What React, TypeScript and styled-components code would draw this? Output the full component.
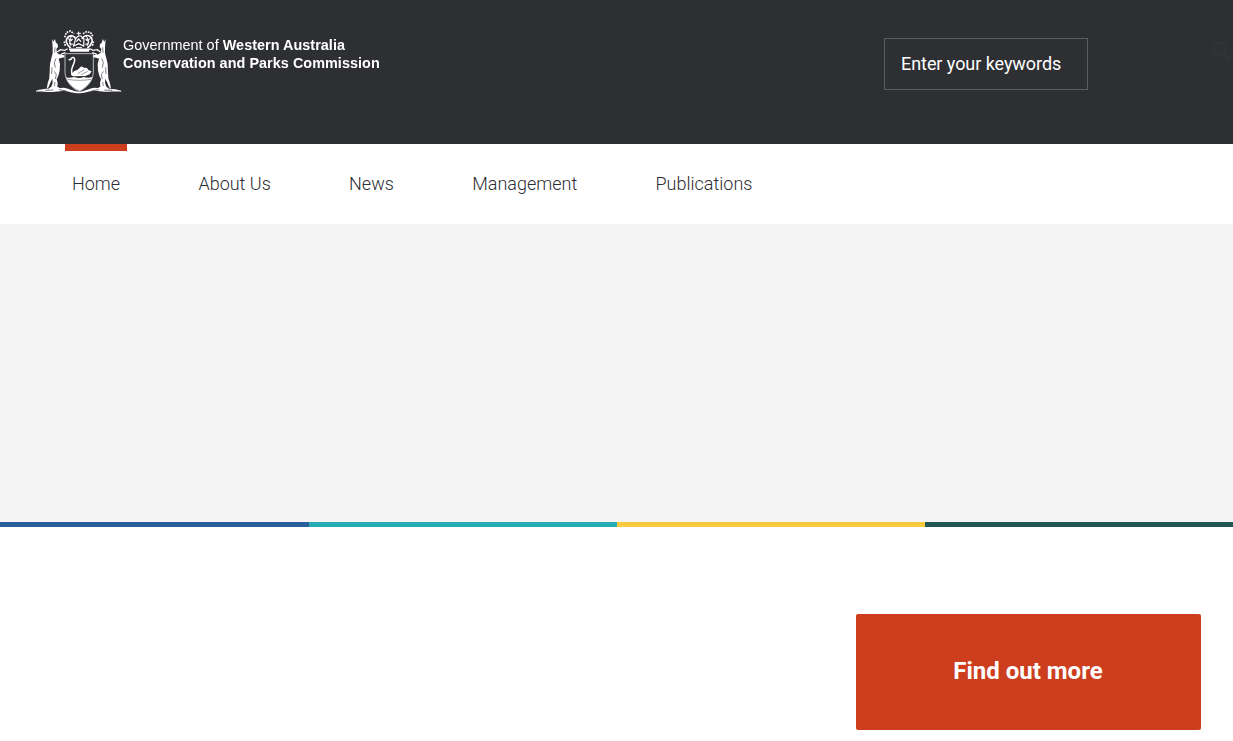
import React from "react";
import styled, { createGlobalStyle } from "styled-components";

const GlobalStyle = createGlobalStyle`
  * { box-sizing: border-box; }
  body { margin: 0; background: #fff; font-family: Roboto, sans-serif; overflow: hidden; }
`;

const Page = styled.div`
  height: 741px;
  overflow: hidden;
`;

const Header = styled.header`
  display: flex;
  align-items: flex-start;
  height: 144px;
  padding-left: 30px;
  background: #2e2f33;
`;

const Brand = styled.a`
  display: flex;
  width: 854px;
  padding-top: 24px;
  color: #fff;
  text-decoration: none;
`;

const BrandText = styled.div`
  padding-top: 12px;
  margin-left: -3px;
  font: 14.4px/18px "Liberation Sans", sans-serif;
  white-space: nowrap;
  will-change: transform;
`;

const BrandLine = styled.div<{ $spacing: number; $bold?: boolean }>`
  letter-spacing: ${(p) => p.$spacing}px;
  font-weight: ${(p) => (p.$bold ? 700 : 400)};
`;

const Search = styled.form`
  display: flex;
  flex: 1;
  justify-content: space-between;
  margin-top: 38px;
`;

const SearchInput = styled.input`
  width: 204px;
  height: 52px;
  padding: 0 16px 2px;
  border: 1px solid #5b5c60;
  border-radius: 0;
  background: transparent;
  font: 400 18px Roboto, sans-serif;
  letter-spacing: -0.06px;
  color: #fff;
  &::placeholder { color: #fff; opacity: 1; }
`;

const SearchButton = styled.button`
  display: flex;
  width: 22px;
  height: 26px;
  padding: 0;
  border: 0;
  background: none;
  color: #323334;
`;

const Nav = styled.nav`
  display: flex;
  gap: 64.3px;
  height: 80px;
  padding-left: 65px;
  background: #fff;
`;

const NavItem = styled.a<{ $active?: boolean }>`
  height: 80px;
  padding: 0 7px;
  border-top: 7px solid ${(p) => (p.$active ? "#cc3e1e" : "transparent")};
  font-size: 18px;
  font-weight: 300;
  line-height: 66px;
  color: #2d2e33;
  text-decoration: none;
`;

const Hero = styled.section`
  height: 298px;
  background: #f4f4f4;
`;

const Stripes = styled.div`
  display: grid;
  grid-template-columns: 309px 308px 308px 308px;
  height: 5px;
`;

const Stripe = styled.span<{ $color: string }>`
  background: ${(p) => p.$color};
`;

const Content = styled.main`
  display: flex;
  justify-content: flex-end;
  padding: 87px 32px 0 0;
`;

const FindOutMore = styled.a`
  display: flex;
  align-items: center;
  justify-content: center;
  width: 345px;
  height: 116px;
  padding: 0 1px 2px 0;
  border-radius: 2px;
  background: #cc3e1e;
  color: #fff;
  font-size: 24px;
  font-weight: 700;
  text-decoration: none;
`;

const Kangaroo = () => (
  <g>
    <path
      fill="#fff"
      d="M66 45L70 53L75 45L77 55L83 61L84 69L79 75L81 86L87 91L103 94V100L89 103L86 104L90 120L89 140L85 155L80 166L83 176L82 188L91 193V197H56L57 193L64 188L68 176L67 164L61 176L56 189L50 195L53 178L58 163L59 143L60 120L64 103L68 88L68 70Z"
    />
    <path fill="none" stroke="#2e2f33" strokeWidth="1.8" d="M78 103l-5 13 3 15M73 142l6 10-3 13M66 130l-1 20M75 70l-1 16M75 174l-2 12" />
    <path fill="none" stroke="#fff" strokeWidth="3.5" d="M82 84l9-7 13 2 9-5M89 102l6-12 11-4" />
  </g>
);

const Crest = () => (
  <svg width="96" height="76" viewBox="0 0 288 228" aria-label="Western Australia coat of arms">
    <Kangaroo />
    <g transform="matrix(-1 0 0 1 293 0)">
      <Kangaroo />
    </g>
    <g fill="none" stroke="#fff">
      <path strokeWidth="2" d="M105 89H190V146C188 175 168 191 147 204C127 191 107 175 105 146Z" />
      <path strokeWidth="5" d="M117 76H180M120 81H177" />
      <path strokeWidth="5" d="M122 72C110 63 104 49 114 39c9-7 20-3 24 7M172 72c14-10 19-24 9-34-9-7-21-3-25 7" />
      <path strokeWidth="3.5" d="M137 43l-6 23 15-7 15 7 1-21-9-9h-8zM123 65l-4-12 9-8M171 65l5-12-9-8M139 53l7-8 7 8" />
      <path strokeWidth="3" d="M113 44l13 5M125 34l-7 17M181 44l-12 5M168 34l8 17M146 23v13M140 28h13M117 59l13 2M177 59l-12 2M138 71h18" />
      <path strokeWidth="5" strokeDasharray="5 3" d="M104 40l5-14 12-5 11 8M159 29l11-6 12 3 8 13M106 65l-4-14M187 65l4-14" />
      <path strokeWidth="4.5" d="M123 104c4-6 12-4 11 4 0 11-8 18-9 29-1 7 0 13 3 18M116 108l9-3" />
    </g>
    <path fill="#fff" d="M108 160c10 3 18 1 25-1 9 4 20 4 28 0 9 3 18 3 26 0-5 19-23 34-39 42-18-8-35-23-40-41z" />
    <path fill="#fff" d="M123 152c6-9 12-13 19-14l12-11 8 4 9 1 4 6 10 4-6 9-13 5-37 1z" />
    <path fill="none" stroke="#2e2f33" strokeWidth="1.4" d="M143 149l20-12M153 152l20-10M112 166c22 4 50 4 71 0" />
    <path fill="#fff" d="M18 200c13-5 27-6 40-6 18 0 28-2 43-3 14 2 26 9 46 13 20-4 32-11 46-13 15 1 25 3 43 3 13 0 26 2 38 6l-1 3c-19-1-34 1-48 0-17-1-28-4-42-1-12 2-20 6-36 6-18 0-26-4-38-6-14-3-27 1-43 2-15 1-30-2-48-1z" />
    <path fill="none" stroke="#2e2f33" strokeWidth="2" d="M46 199l24-1M87 197l22 4M223 198l24 1M184 201l22-4" />
  </svg>
);

const navItems = ["Home", "About Us", "News", "Management", "Publications"];
const stripeColors = ["#2a6099", "#27acb5", "#fbca40", "#215853"];

export default function App() {
  return (
    <Page>
      <GlobalStyle />
      <Header>
        <Brand>
          <Crest />
          <BrandText>
            <BrandLine $spacing={0.04}>
              Government of <b>Western Australia</b>
            </BrandLine>
            <BrandLine $spacing={0.05} $bold>
              Conservation and Parks Commission
            </BrandLine>
          </BrandText>
        </Brand>
        <Search>
          <SearchInput placeholder="Enter your keywords" />
          <SearchButton type="button" aria-label="Search">
            <svg width="22" height="26" viewBox="0 0 22 26" fill="none" stroke="currentColor" strokeWidth="2.6">
              <circle cx="8.5" cy="11" r="6.3" />
              <path d="M13 15.5l6.5 6.5" />
            </svg>
          </SearchButton>
        </Search>
      </Header>
      <Nav>
        {navItems.map((label, i) => (
          <NavItem key={label} $active={i === 0}>
            {label}
          </NavItem>
        ))}
      </Nav>
      <Hero />
      <Stripes>
        {stripeColors.map((color) => (
          <Stripe key={color} $color={color} />
        ))}
      </Stripes>
      <Content>
        <FindOutMore>Find out more</FindOutMore>
      </Content>
    </Page>
  );
}
